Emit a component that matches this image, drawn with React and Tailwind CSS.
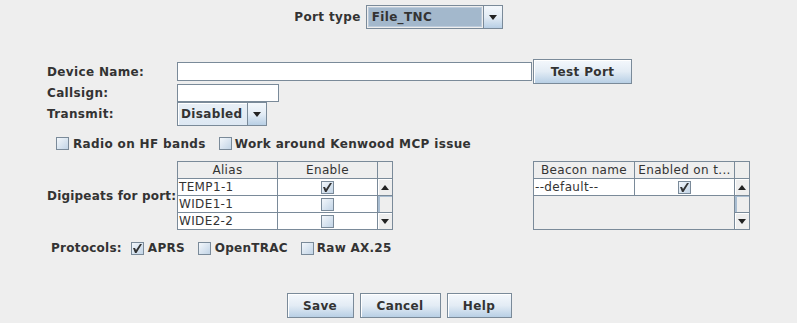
import React from "react";

const Arrow = ({ up }) => (
    <svg width="8" height="5" viewBox="0 0 8 5">
        <path d={up ? "M0 5 L4 0 L8 5 Z" : "M0 0 L8 0 L4 5 Z"} fill="#222222" />
    </svg>
);

const Check = () => (
    <svg width="9" height="9" viewBox="0 0 9 9">
        <path d="M0 4 L2 4 L3 6 L7 0 L9 0 L3.5 9 L2 9 Z" fill="#333333" />
    </svg>
);

const CheckBox = ({ checked }) => (
    <span className="w-[13px] h-[13px] border border-[#7a8a99] bg-linear-to-br from-[#f3f7fb] to-[#c2d4e6] flex items-center justify-center shrink-0">
        {checked && <Check />}
    </span>
);

const MetalButton = ({ label, className = "" }) => (
    <button className={`h-[25px] border border-[#7a8a99] bg-linear-to-b from-[#f4f8fc] via-[#e3ecf5] to-[#b8cfe5] shadow-[inset_1px_1px_0_#ffffff] font-bold text-[#333333] text-[12px] tracking-[0.35px] ${className}`}>
        {label}
    </button>
);

const Combo = ({ value, focused, className = "" }) => (
    <div className={`flex h-[24px] border border-[#7a8a99] ${className}`}>
        <div className={`flex-1 flex items-center pl-[3px] font-bold ${focused ? "bg-[#a3b8cc] border border-[#bccbdb] m-[1px]" : "bg-linear-to-b from-[#e8eff6] to-[#dde8f3] shadow-[inset_1px_1px_0_#ffffff]"}`}>
            {value}
        </div>
        <div className="w-[19px] border-l border-[#7a8a99] bg-linear-to-b from-[#f4f8fc] via-[#e3ecf5] to-[#b8cfe5] flex items-center justify-center">
            <Arrow />
        </div>
    </div>
);

const ScrollBar = () => (
    <div className="w-[16px] flex flex-col bg-[#eeeeee] border-l border-[#7a8a99]">
        <div className="h-[17px] border-b border-[#7a8a99]" />
        <div className="h-[17px] flex items-center justify-center border-b border-[#7a8a99] shadow-[inset_1px_1px_0_#ffffff]">
            <Arrow up />
        </div>
        <div className="flex-1 border-l-2 border-t border-[#a9bdd1] bg-[#eeeeee]" />
        <div className="h-[17px] flex items-center justify-center border-t border-[#7a8a99] shadow-[inset_1px_1px_0_#ffffff]">
            <Arrow />
        </div>
    </div>
);

const App = () => {
    const digis = [
        { alias: "TEMP1-1", on: true },
        { alias: "WIDE1-1", on: false },
        { alias: "WIDE2-2", on: false },
    ];

    return (
        <div className="w-[797px] h-[323px] bg-[#eeeeee] text-[#333333] font-['DejaVu_Sans',sans-serif] text-[12px] tracking-[0.35px] flex flex-col overflow-hidden">
            {/* Port type */}
            <div className="flex justify-center items-center gap-[5px] pt-[5px]">
                <span className="font-bold">Port type</span>
                <Combo value="File_TNC" focused className="w-[137px]" />
            </div>

            {/* Device fields */}
            <div className="flex flex-col pl-[47px] mt-[30px]">
                <div className="flex items-center h-[25px]">
                    <span className="w-[130px] font-bold">Device Name:</span>
                    <div className="w-[355px] h-[19px] bg-white border border-[#7a8a99]" />
                    <MetalButton label="Test Port" className="w-[99px] ml-[1px]" />
                </div>
                <div className="flex items-center h-[18px]">
                    <span className="w-[130px] font-bold">Callsign:</span>
                    <div className="w-[102px] h-[18px] bg-white border border-[#7a8a99]" />
                </div>
                <div className="flex items-center h-[24px]">
                    <span className="w-[130px] font-bold">Transmit:</span>
                    <Combo value="Disabled" className="w-[90px]" />
                </div>
            </div>

            {/* Options */}
            <div className="flex items-center h-[17px] mt-[9px] pl-[56px] font-bold">
                <CheckBox />
                <span className="ml-[4px]">Radio on HF bands</span>
                <span className="ml-[13px]"><CheckBox /></span>
                <span className="ml-[3px]">Work around Kenwood MCP issue</span>
            </div>

            {/* Tables */}
            <div className="flex items-center pl-[47px] mt-[9px]">
                <span className="w-[130px] font-bold whitespace-nowrap tracking-[0.2px]">Digipeats for port:</span>
                <div className="flex w-[216px] h-[69px] border border-[#7a8a99] bg-white">
                    <div className="flex flex-col w-[199px]">
                        <div className="flex h-[17px] bg-[#eeeeee] border-b border-[#7a8a99]">
                            <span className="w-[100px] border-r border-[#7a8a99] text-center leading-[16px]">Alias</span>
                            <span className="w-[99px] text-center leading-[16px]">Enable</span>
                        </div>
                        {digis.map((d) => (
                            <div key={d.alias} className="flex h-[17px] border-b border-[#7a8a99] last:border-b-0">
                                <span className="w-[100px] border-r border-[#7a8a99] pl-[1px] leading-[16px]">{d.alias}</span>
                                <span className="w-[99px] flex items-center justify-center">
                                    <CheckBox checked={d.on} />
                                </span>
                            </div>
                        ))}
                    </div>
                    <ScrollBar />
                </div>

                <div className="flex w-[217px] h-[69px] border border-[#7a8a99] bg-[#eeeeee] ml-[140px]">
                    <div className="flex flex-col w-[200px]">
                        <div className="flex h-[17px] border-b border-[#7a8a99]">
                            <span className="w-[101px] border-r border-[#7a8a99] text-center leading-[16px] whitespace-nowrap">Beacon name</span>
                            <span className="w-[99px] text-center leading-[16px] whitespace-nowrap">Enabled on t...</span>
                        </div>
                        <div className="flex h-[17px] bg-white border-b border-[#7a8a99]">
                            <span className="w-[101px] border-r border-[#7a8a99] pl-[1px] leading-[16px]">--default--</span>
                            <span className="w-[99px] flex items-center justify-center">
                                <CheckBox checked />
                            </span>
                        </div>
                    </div>
                    <ScrollBar />
                </div>
            </div>

            {/* Protocols */}
            <div className="flex items-center h-[18px] mt-[9px] pl-[51px] font-bold tracking-[0.25px]">
                <span>Protocols:</span>
                <span className="ml-[9px]"><CheckBox checked /></span>
                <span className="ml-[4px]">APRS</span>
                <span className="ml-[13px]"><CheckBox /></span>
                <span className="ml-[4px]">OpenTRAC</span>
                <span className="ml-[13px]"><CheckBox /></span>
                <span className="ml-[3px]">Raw AX.25</span>
            </div>

            {/* Buttons */}
            <div className="flex justify-center gap-[6px] mt-[36px] pl-[1px]">
                <MetalButton label="Save" className="w-[67px]" />
                <MetalButton label="Cancel" className="w-[81px]" />
                <MetalButton label="Help" className="w-[65px]" />
            </div>
        </div>
    );
};

export default App;
